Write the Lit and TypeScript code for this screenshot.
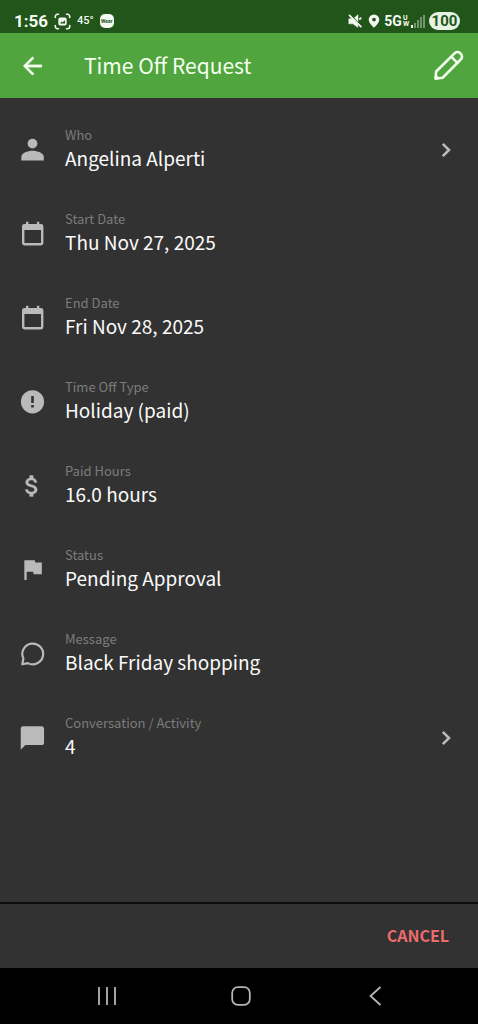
import { LitElement, html, svg, css, nothing, type SVGTemplateResult } from "lit";
import { customElement } from "lit/decorators.js";

interface Entry {
  label: string;
  value: string;
  icon: SVGTemplateResult;
  opens?: boolean;
}

const calendar = svg`<path fill-rule="evenodd" d="M8 1.7h2.4V4h8.5V1.7h2.4V4H23a2.4 2.4 0 0 1 2.4 2.4V23a2.4 2.4 0 0 1-2.4 2.4H6.4A2.4 2.4 0 0 1 4 23V6.4A2.4 2.4 0 0 1 6.400 4H8zM6.400 10V23H23V10z"/>`;

const entries: Entry[] = [
  {
    label: "Who",
    value: "Angelina Alperti",
    opens: true,
    icon: svg`<circle cx="14.500" cy="7.600" r="4.900"/><path d="M3.300 24.600V21c0-4 6.500-6.200 11.200-6.200S25.800 17 25.800 21v3.600z"/>`,
  },
  { label: "Start Date", value: "Thu Nov 27, 2025", icon: calendar },
  { label: "End Date", value: "Fri Nov 28, 2025", icon: calendar },
  {
    label: "Time Off Type",
    value: "Holiday (paid)",
    icon: svg`<path fill-rule="evenodd" d="M14.500 2.200a11.600 11.600 0 1 0 0 23.200a11.600 11.600 0 0 0 0-23.200zM13.200 8h2.600v7h-2.600zM13.200 17h2.600v2.600h-2.600z"/>`,
  },
  {
    label: "Paid Hours",
    value: "16.0 hours",
    icon: svg`<path stroke="currentColor" stroke-width=".3" transform="scale(1.1667)" d="M11.800 10.900c-2.270-.590-3-1.200-3-2.150 0-1.090 1.010-1.850 2.700-1.850 1.780 0 2.440.850 2.500 2.100h2.210c-.070-1.720-1.120-3.300-3.210-3.810V3h-3v2.160c-1.940.420-3.500 1.680-3.500 3.610 0 2.310 1.910 3.460 4.700 4.130 2.500.600 3 1.480 3 2.410 0 .690-.490 1.790-2.700 1.790-2.060 0-2.870-.920-2.980-2.100h-2.200c.120 2.190 1.760 3.420 3.680 3.830V21h3v-2.150c1.950-.370 3.500-1.500 3.500-3.550 0-2.840-2.430-3.810-4.700-4.400z"/>`,
  },
  {
    label: "Status",
    value: "Pending Approval",
    icon: svg`<path transform="translate(.5 -.5) scale(1.1667)" d="M14.400 6L14 4H5v17h2v-7h5.600l.4 2h7V6z"/>`,
  },
  {
    label: "Message",
    value: "Black Friday shopping",
    icon: svg`<path fill="none" stroke="currentColor" stroke-width="2.200" stroke-linejoin="round" d="M4.300 24.300L5.400 18.500A10.400 10.400 0 1 1 9.800 23.100Z"/>`,
  },
  {
    label: "Conversation / Activity",
    value: "4",
    opens: true,
    icon: svg`<path transform="translate(.4 0) scale(1.1667)" d="M20 2H4c-1.100 0-2 .9-2 2v18l4-4h14c1.100 0 2-.9 2-2V4c0-1.100-.9-2-2-2z"/>`,
  },
];

@customElement("status-bar")
class StatusBar extends LitElement {
  static styles = css`
    :host {
      display: flex;
      justify-content: space-between;
      box-sizing: border-box;
      height: 33px;
      padding: 9px 18px 0 14px;
      background: #21551a;
      color: #f4faf2;
      font-family: Roboto, sans-serif;
      font-weight: 700;
    }
    .group { display: flex; align-items: center; }
    .left { gap: 6px; }
    .time { font-size: 17px; line-height: 24px; }
    .temp { font-size: 11px; font-weight: 500; line-height: 24px; }
    .wear {
      width: 14px;
      height: 14px;
      border-radius: 5px;
      background: #f4faf2;
      color: #21551a;
      font-size: 5px;
      line-height: 14px;
      text-align: center;
    }
    .net { display: flex; align-items: center; font-size: 14px; line-height: 24px; }
    .band { display: grid; margin-left: 1px; font-size: 7px; line-height: 6px; }
    .pill {
      margin-left: 4px;
      width: 31px;
      border-radius: 9px;
      background: #e6f2e3;
      color: #21551a;
      font-size: 15px;
      line-height: 18px;
      text-align: center;
    }
    .mute { margin-right: 6px; }
    .pin { margin-right: 4px; }
    .bars { margin-left: 2px; }
    svg { display: block; fill: currentColor; }
  `;

  render() {
    return html`
      <div class="group left">
        <span class="time">1:56</span>
        <svg width="17" height="17" viewBox="0 0 17 17" aria-hidden="true">
          <path fill="none" stroke="currentColor" stroke-width="1.600" stroke-linecap="round" d="M1.300 4.500V3.500A2.200 2.200 0 0 1 3.500 1.300h1M12.500 1.300h1a2.200 2.200 0 0 1 2.200 2.200v1M15.700 12.500v1a2.200 2.200 0 0 1-2.200 2.200h-1M4.500 15.700h-1a2.200 2.200 0 0 1-2.200-2.200v-1"/>
          <path fill-rule="evenodd" d="M6.300 4.500h4.400a2 2 0 0 1 2 2v4a2 2 0 0 1-2 2H6.300a2 2 0 0 1-2-2v-4a2 2 0 0 1 2-2zM6 10.500h5V7.300L8.800 9.300L7.800 8.500z"/>
        </svg>
        <span class="temp">45°</span>
        <span class="wear">Wear</span>
      </div>
      <div class="group">
        <svg class="mute" width="14" height="14" viewBox="0 0 14 14" aria-hidden="true">
          <path stroke="currentColor" stroke-width=".5" d="M.8 4.800h3.400L9.800 10.400V13.400L5 9.800H.8zM10 .8V7.400L6.400 3.800z"/>
          <path fill="none" stroke="currentColor" stroke-width="1.700" stroke-linecap="round" d="M1.500 1.300l11.400 11.400M11.800 5l1-.8"/>
        </svg>
        <svg class="pin" width="12" height="14" viewBox="0 0 12 14" aria-hidden="true">
          <path fill-rule="evenodd" d="M6 .4a5.300 5.300 0 0 0-5.300 5.300C.7 9 6 13.700 6 13.700S11.300 9 11.300 5.700A5.300 5.300 0 0 0 6 .4zM6 3.700a1.900 1.900 0 1 1 0 3.800a1.900 1.900 0 0 1 0-3.800z"/>
        </svg>
        <span class="net">5G<span class="band"><span>U</span><span>W</span></span></span>
        <svg class="bars" width="14" height="14" viewBox="0 0 14 14" aria-hidden="true">
          <path d="M0 11h2v3H0z"/>
          <path opacity=".4" d="M3 9h2v5H3zM6 6h2v8H6zM9 3h2v11H9zM12 1h2v13h-2z"/>
        </svg>
        <span class="pill">100</span>
      </div>
    `;
  }
}

@customElement("app-root")
class AppRoot extends LitElement {
  static styles = css`
    :host {
      display: flex;
      flex-direction: column;
      min-height: 100vh;
      background: #323232;
      color: #fafafa;
      font-family: "Noto Sans CJK SC", "Noto Sans", sans-serif;
    }
    button {
      border: 0;
      margin: 0;
      padding: 0;
      background: none;
      color: inherit;
      font: inherit;
      text-align: left;
      cursor: pointer;
    }
    svg { display: block; flex: none; fill: currentColor; }
    .line { fill: none; stroke: currentColor; }
    .bar {
      display: flex;
      align-items: center;
      box-sizing: border-box;
      height: 65px;
      padding: 0 14px 0 18px;
      background: #50a53e;
      color: #f4fff0;
    }
    .title {
      flex: 1;
      margin: 0 0 0 38px;
      padding-bottom: 1px;
      font-size: 21px;
      font-weight: 400;
      line-height: 32px;
    }
    .list { flex: 1; margin: 0; padding: 10px 0 0; list-style: none; }
    .entry {
      display: flex;
      align-items: center;
      box-sizing: border-box;
      width: 100%;
      height: 84px;
      padding: 0 18px;
    }
    .icon { color: #bababa; }
    .text { flex: 1; display: grid; margin-left: 19px; padding-bottom: 4px; }
    .label { color: #7c7c7c; font-size: 13px; line-height: 20px; }
    .value { font-size: 19px; line-height: 26px; }
    .foot {
      display: flex;
      align-items: center;
      justify-content: flex-end;
      box-sizing: border-box;
      height: 66px;
      padding: 0 29px 2px;
      border-top: 2px solid #0c0c0c;
    }
    .cancel { color: #ee6b6b; font-size: 16px; font-weight: 700; line-height: 24px; }
    .nav { display: flex; height: 56px; padding: 0 36px 0 40px; background: #000; color: #b4b4b4; }
    .key { flex: 1; display: flex; align-items: center; justify-content: center; }
  `;

  private entryBody(e: Entry) {
    return html`
      <svg class="icon" width="28" height="28" viewBox="0 0 28 28" aria-hidden="true">${e.icon}</svg>
      <span class="text"><span class="label">${e.label}</span><span class="value">${e.value}</span></span>
      ${e.opens
        ? html`<svg class="icon line" width="28" height="28" viewBox="0 0 28 28" stroke-width="2.600" aria-hidden="true"><path d="M10.800 7.800L17 14l-6.200 6.200"/></svg>`
        : nothing}
    `;
  }

  render() {
    return html`
      <status-bar></status-bar>
      <header class="bar">
        <button aria-label="Back">
          <svg width="28" height="28" viewBox="0 0 24 24"><path stroke="currentColor" stroke-width=".3" d="M20.400 11H8.200l5.600-5.600L12.400 4l-8 8 8 8 1.400-1.400L8.200 13h12.200z"/></svg>
        </button>
        <h1 class="title">Time Off Request</h1>
        <button aria-label="Edit">
          <svg class="line" width="32" height="32" viewBox="0 0 32 32" stroke-width="2.600" stroke-linejoin="round">
            <path d="M3.400 28.700L4.200 21.500L22.500 3.300A3.900 3.900 0 0 1 28.500 3.600A3.900 3.900 0 0 1 28.700 9.500L10.500 27.800Z"/>
            <path d="M19.200 6.600l6.200 6.200"/>
            <path fill="currentColor" stroke="none" d="M3.500 24l5 5H3z"/>
          </svg>
        </button>
      </header>
      <ul class="list">
        ${entries.map(
          (e) => html`<li>
            ${e.opens
              ? html`<button class="entry">${this.entryBody(e)}</button>`
              : html`<div class="entry">${this.entryBody(e)}</div>`}
          </li>`
        )}
      </ul>
      <footer class="foot"><button class="cancel">CANCEL</button></footer>
      <nav class="nav">
        <button class="key" aria-label="Recent apps">
          <svg class="line" width="20" height="20" viewBox="0 0 20 20" stroke-width="1.800"><path d="M2 1v18M10 1v18M18 1v18"/></svg>
        </button>
        <button class="key" aria-label="Home">
          <svg class="line" width="20" height="20" viewBox="0 0 20 20" stroke-width="1.800"><rect x="1.200" y="1.200" width="17.600" height="17.600" rx="5.500"/></svg>
        </button>
        <button class="key" aria-label="Back">
          <svg class="line" width="20" height="20" viewBox="0 0 20 20" stroke-width="1.800"><path d="M15.500 1L5.500 10l10 9"/></svg>
        </button>
      </nav>
    `;
  }
}
